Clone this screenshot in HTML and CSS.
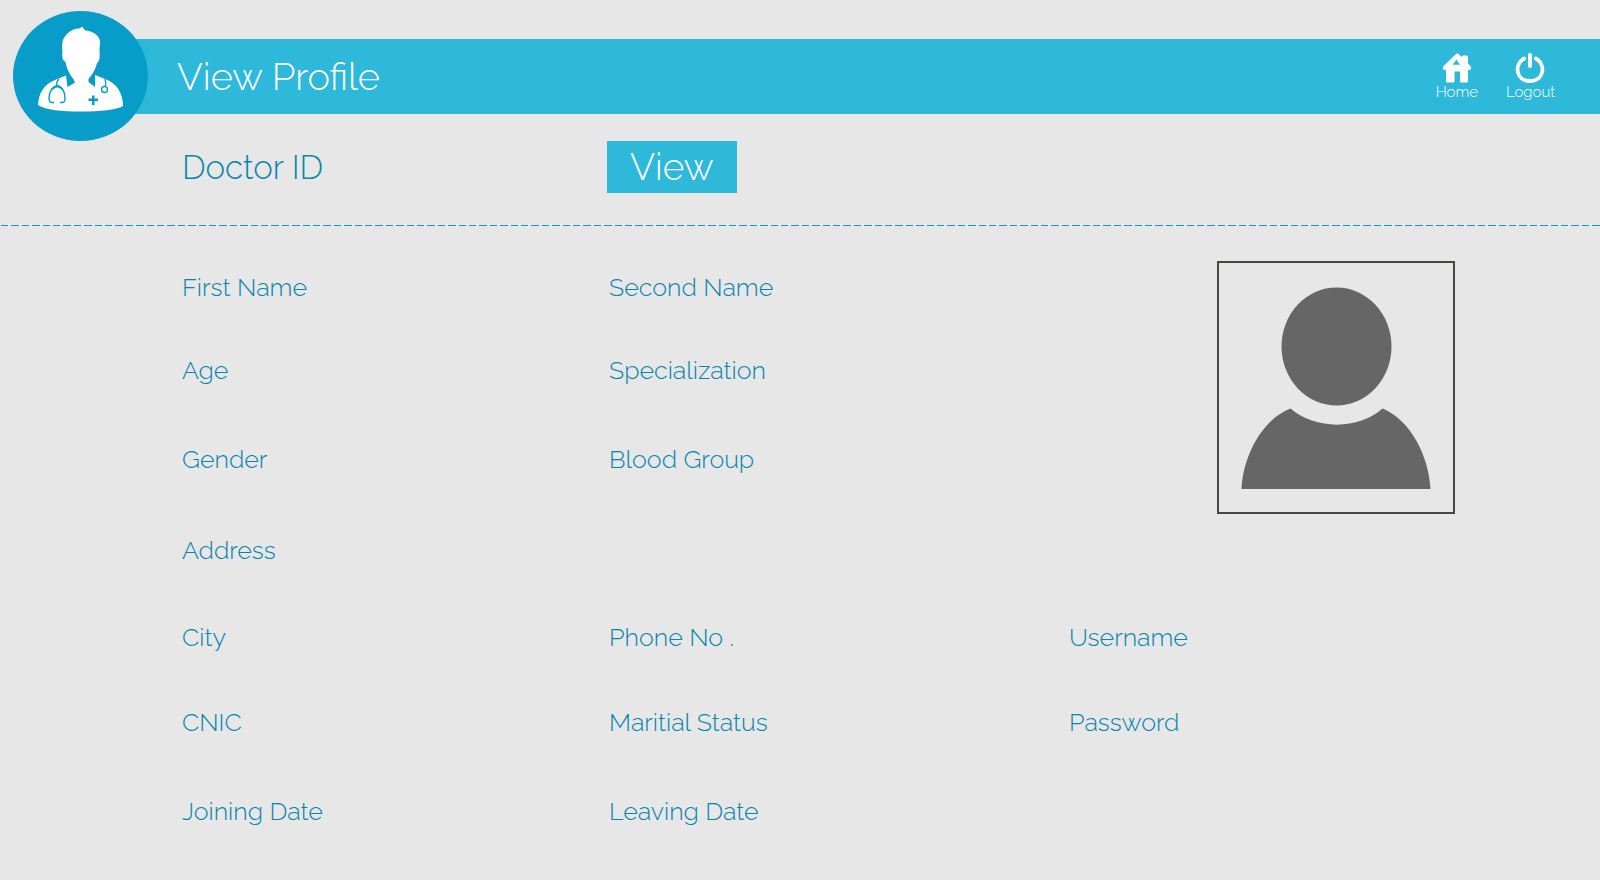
FILE: index.html
```html
<!DOCTYPE html>
<html lang="en">
<head>
<meta charset="utf-8">
<meta name="viewport" content="width=device-width, initial-scale=1">
<title>View Profile</title>
<link rel="stylesheet" href="styles.css">
</head>
<body>
<header class="header">
  <div class="bar">
    <h1 class="title">View Profile</h1>
    <nav class="nav">
      <a class="nav-link" href="#home">
        <svg class="nav-icon" viewBox="0 0 30 30" aria-hidden="true">
          <path fill="#fff" d="M14.300.8C15 .3 15.500.3 16.200.8L19.500 4Q19.500 2.500 21 2.500H24.500Q26 2.500 26 4V10.500L28.500 13Q29.500 14.500 29 16Q28.500 17 27 17H26V28Q26 29.500 24.500 29.500H19.500Q18 29.500 18 28V18.500H12.500V28Q12.500 29.500 11 29.500H5.500Q4 29.500 4 28V17H2.500Q1 17 1 15.500V14Q1 13 2 12.500Z"/>
          <path fill="#2eb8da" d="M14.500 6.500L18 11.800H10.500Z"/>
        </svg>
        <span>Home</span>
      </a>
      <a class="nav-link" href="#logout">
        <svg class="nav-icon" viewBox="0 0 30 30" aria-hidden="true">
          <path d="M9 5.500C-1 11.500 .5 28 15 28S31 11.500 21 5.500" fill="none" stroke="#fff" stroke-width="3.800" stroke-linecap="round"/>
          <path d="M15 2V13" fill="none" stroke="#fff" stroke-width="4" stroke-linecap="round"/>
        </svg>
        <span>Logout</span>
      </a>
    </nav>
  </div>
  <svg class="badge" viewBox="0 0 135 130" role="img" aria-label="Doctor">
    <ellipse cx="67.500" cy="65" rx="67.500" ry="65" fill="#079dc8"/>
    <path fill="#fff" d="M50 29C53 22 59 18.500 64 17.500C66 18 67 17 68 16.500C68.500 15.500 70.500 16 71 18.500L73 19.500C80 20 87 25 87 31L86.500 40Q87.500 50 84 52C82 60 78 65 75.500 68V71L82 76V64L92 68C106 73 110 85 110 95C103 99 88 100.500 67.500 100.500C48 100.500 33 99 25 94C26 82 30 74 42 69L53 64.500L54.500 76L62 71.500L60.500 68C57 64 55 59 54 57L52.500 51C48.500 49 49 43 49.500 41C49 36 49 32 50 29Z"/>
    <g fill="none" stroke="#079dc8" stroke-width="1.400">
      <path d="M46 68Q43 71 44 75M41 91.500H38.500Q36 91 36 87C36 80 40 75 44.300 75S52 80 52 87Q52 91 50 91.500H47M92 68Q93.500 73 92 75.500"/>
      <circle cx="91.500" cy="78.500" r="3"/>
    </g>
    <path fill="#079dc8" d="M38 81Q40.500 74 44.300 74T50.500 81Q47.500 76.500 44.300 76.500T38 81Z"/>
    <path fill="#079dc8" d="M79 84.500H81.500V87.500H85V90H81.500V94H79V90H75.500V87.500H79Z"/>
  </svg>
</header>

<main>
  <form class="lookup">
    <span class="lookup-label">Doctor ID</span>
    <button class="view-button" type="button">View</button>
  </form>

  <section class="profile" aria-label="Doctor profile">
    <span class="field">First Name</span>
    <span class="field">Second Name</span>
    <figure class="photo">
      <svg class="person" viewBox="0 0 190 202" role="img" aria-label="Profile photo">
        <ellipse cx="95.500" cy="59.500" rx="55" ry="59" fill="#666"/>
        <path fill="#666" d="M.5 202C2 170 20 133 49.500 121.500C74 143 118 143 141.500 121.500C170 133 188 170 189.500 202Z"/>
      </svg>
    </figure>
    <span class="field">Age</span>
    <span class="field">Specialization</span>
    <span class="field">Gender</span>
    <span class="field">Blood Group</span>
    <span class="field wide">Address</span>
    <span class="field">City</span>
    <span class="field">Phone No .</span>
    <span class="field">Username</span>
    <span class="field">CNIC</span>
    <span class="field">Maritial Status</span>
    <span class="field">Password</span>
    <span class="field">Joining Date</span>
    <span class="field">Leaving Date</span>
  </section>
</main>
</body>
</html>
```
FILE: styles.css
```css
* {
  box-sizing: border-box;
}

body {
  margin: 0;
  background: #e7e7e7;
  color: #0785ab;
  font-family: Raleway, Lato, "Open Sans", sans-serif;
  font-weight: 300;
}

.header {
  position: relative;
  padding-top: 39px;
}

.bar {
  display: flex;
  align-items: center;
  justify-content: space-between;
  min-height: 75px;
  margin-left: 80px;
  padding: 0 45px 0 97px;
  background: #2eb8da;
  color: #fff;
}

.title {
  margin: 0;
  font-size: 38px;
  font-weight: 300;
  line-height: 48px;
}

.nav {
  display: flex;
  gap: 28px;
}

.nav-link {
  display: flex;
  flex-direction: column;
  align-items: center;
  color: #fff;
  font-size: 15px;
  line-height: 18px;
  text-decoration: none;
}

.nav-icon {
  width: 30px;
  height: 30px;
}

.badge {
  position: absolute;
  top: 11px;
  left: 13px;
  width: 135px;
  height: 130px;
}

.lookup {
  display: grid;
  grid-template-columns: 425fr 993fr;
  align-items: center;
  justify-items: start;
  padding: 27px 0 33px 182px;
  background: repeating-linear-gradient(90deg, transparent 0 1px, #079dc8 1px 8px, transparent 8px 11px, #079dc8 11px 19px, transparent 19px 22px, #079dc8 22px 29px, transparent 29px 32px, #079dc8 32px 40px, transparent 40px 43px, #079dc8 43px 50px, transparent 50px 52px) bottom / 100% 1px no-repeat;
}

.lookup-label {
  padding-top: 2px;
  font-size: 33px;
  line-height: 40px;
}

.view-button {
  padding: 2px 23px;
  border: 0;
  background: #2eb8da;
  color: #fff;
  font: inherit;
  font-size: 37px;
  line-height: 48px;
}

.profile {
  display: grid;
  grid-template-columns: 427fr 460fr 531fr;
  grid-template-rows: 83px 89px 91px 87px 85px 89px auto;
  padding: 45px 0 40px 182px;
}

.field {
  font-size: 25px;
  line-height: 32px;
}

.wide {
  grid-column: span 2;
}

.photo {
  grid-row: span 4;
  justify-self: end;
  align-self: start;
  margin: -10px 145px 0 0;
  padding: 24px 22px 23px;
  border: 2px solid #4a4743;
}

.person {
  display: block;
  width: 190px;
  height: 202px;
}
```
